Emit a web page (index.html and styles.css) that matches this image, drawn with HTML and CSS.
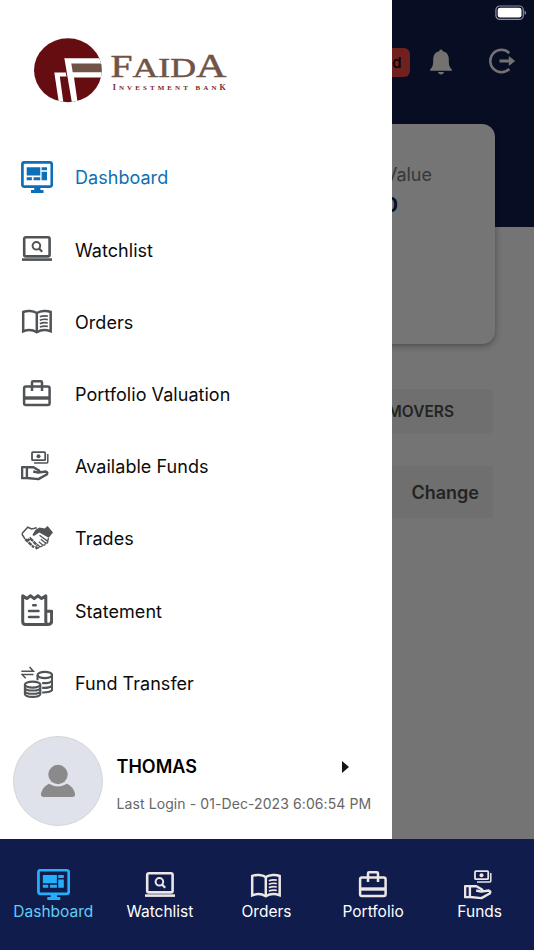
FILE: index.html
```html
<!DOCTYPE html>
<html lang="en">
<head>
<meta charset="utf-8">
<title>Faida Investment Bank</title>
<link rel="stylesheet" href="styles.css">
</head>
<body>
<svg class="sprite" aria-hidden="true">
  <symbol id="i-dash" viewBox="0 0 32 32" preserveAspectRatio="none">
    <rect x="1.4" y="1.3" width="29.4" height="24.4" rx="2.2" fill="none" stroke="currentColor" stroke-width="2.7"/>
    <path fill="currentColor" d="M5.700 6.200h13.600v8.400H5.700zM20.600 6.200H26v3h-5.400zM20.600 10.800H26v8.500h-5.400zM5.700 16.200h5.200v3.100H5.700zM12.600 16.200h6.700v3.100h-6.700zM13.200 26h6.200v3h3.100v3H10v-3h3.200z"/>
  </symbol>
  <symbol id="i-watch" viewBox="0 0 32 32">
    <g fill="none" stroke="currentColor">
      <rect x="3.2" y="4.2" width="25.400" height="19.200" rx="1.600" stroke-width="2.600"/>
      <circle cx="15.400" cy="12.800" r="3.800" stroke-width="2"/>
      <path d="m18 15.500 3.200 3.200" stroke-width="2.300"/>
      <path d="M1 26.600h30" stroke-width="2.600"/>
    </g>
  </symbol>
  <symbol id="i-book" viewBox="0 0 32 32">
    <g fill="none" stroke="currentColor" stroke-width="2.500">
      <path d="M15.800 8C12 5.500 6 5.300 2.200 7v19.300c4-1.600 9.600-1.500 13.600.9 4-2.400 9.600-2.500 13.900-.9V7C26 5.300 19.800 5.500 15.800 8z"/>
      <path d="M15.800 8v19"/>
      <path stroke-width="1.700" d="M18.800 11.800q4-1.500 8-.6M18.800 15.200q4-1.500 8-.6M18.800 18.600q4-1.500 8-.6M18.800 22q4-1.500 8-.6"/>
    </g>
  </symbol>
  <symbol id="i-case" viewBox="0 0 32 32">
    <g fill="none" stroke="currentColor" stroke-width="2.500">
      <rect x="3.100" y="8.500" width="25.500" height="18.500" rx="1.800"/>
      <path d="M11 13V4.400q0-1.200 1.200-1.200h7.600q1.200 0 1.200 1.200V13"/>
      <path d="M3 20h25.800" stroke-width="3.400"/>
    </g>
  </symbol>
  <symbol id="i-funds" viewBox="0 0 32 32">
    <g fill="none" stroke="currentColor" stroke-linejoin="round">
      <rect x="11" y="2.200" width="13.200" height="8" rx=".8" stroke-width="1.800"/>
      <circle cx="17.500" cy="6.200" r="2" fill="currentColor" stroke="none"/>
      <path d="M13 12.900h12.900q.9 0 .9-.9V4" stroke-width="1.500"/>
      <path d="M1.100 17.100h4.800v11H1.100zM6 17.200h6.400l5.600 3.300q1.300 1.700-.8 2.100l-5-1.100M17.200 22.600l7.600-1.100q2.400.9.900 3l-8.300 4.600L6 28" stroke-width="2.400"/>
    </g>
  </symbol>
  <symbol id="i-trade" viewBox="0 0 32 32">
    <path d="m.8 11.800 6-6.600 3.800 1.700 5.200-1.200M.9 12l3 4.800" fill="none" stroke="currentColor" stroke-width="1.500"/>
    <path fill="currentColor" d="m14.500 7.800 4-2.400 5.200 1.100L26.600 4l5.400 6.600-4.300 5.200-9.400-5.300-4.600 3.100q-2.200.7-2.100-1.200z"/>
    <path d="m4.200 17.200 8.800 8.300m1.500 1.100 2.200-1.300M5.600 19.600l3.500-3.200 2.500 2.300 1.700 1.800 1.600 1.700.6 2.200" fill="none" stroke="currentColor" stroke-width="2.400" stroke-dasharray="4 .7"/>
    <path d="m18.500 13.200 8.300 6.200q.3 2.200-2.400 1.500l-4.600-3.700m4.500 3.700q.2 3-2.700 2l-3.800-3.200m3.700 3.200q-.4 2.500-3 1.500l-2.400-2.200m2.300 2.300q-1 2.300-2.800 1.300M27.500 16l-.8 3" fill="none" stroke="currentColor" stroke-width="1.300"/>
  </symbol>
  <symbol id="i-state" viewBox="0 0 32 32">
    <g fill="none" stroke="currentColor" stroke-width="3" stroke-linejoin="round" stroke-linecap="round">
      <path d="M1.700 1.800v25.600q0 3 3 3h22.100q3.800 0 3.800-3.500V17.200h-5.800V1.800l-4.200 2.800-3.700-2.800-3.700 2.800-3.700-2.800-3.700 2.800zM24.800 17v10q0 3.400 2.200 3.400"/>
      <path d="M12.200 11.200h2.500M8 17h9.500M8 23h9.500" stroke-width="2.500"/>
    </g>
  </symbol>
  <symbol id="i-transfer" viewBox="0 0 32 32">
    <g fill="none" stroke="currentColor" stroke-width="2.100">
      <path d="M.3 5.200h12L8.600.9M12.500 8.500H1l3.700 3.800" stroke-width="1.600"/>
      <ellipse cx="23.800" cy="9" rx="7.300" ry="3.100"/>
      <path d="M16.500 9v5.200M31.100 9v14.600c0 1.900-4 3-10 2.900M31.100 14.200c-.3 2.300-5.300 3.400-10 2.800M31.100 18.900c-.3 2.300-5.300 3.400-10 2.800"/>
      <ellipse cx="11.600" cy="18.600" rx="7.700" ry="3"/>
      <path d="M3.900 18.600v9.600c.5 3.600 14.900 3.600 15.400 0v-9.600M3.900 21.800c.5 3.600 14.900 3.600 15.400 0M3.900 25.100c.5 3.600 14.900 3.600 15.400 0"/>
    </g>
  </symbol>
</svg>

<div class="screen">
  <main class="page">
    <header class="top">
      <div class="tools">
        <span class="badge">Closed</span>
        <svg class="bell" viewBox="0 0 22 26"><path fill="currentColor" d="M9.200 2.200Q9.300.6 11 .6t1.800 1.600c4 .8 6 3.900 6 8.200 0 5.600.6 7.600 3 9.800v1.500H.2v-1.500c2.400-2.200 3-4.200 3-9.800 0-4.300 2-7.400 6-8.200zM8 23h6q-.6 2.500-3 2.500T8 23z"/></svg>
        <svg class="exit" viewBox="0 0 28 26"><path fill="none" stroke="currentColor" stroke-width="2.500" d="M21.300 5A11.200 11.200 0 1 0 21.300 21"/><path fill="currentColor" d="M11.500 11.500h9.300V8l6.400 5-6.400 5v-3.500h-9.300z"/></svg>
      </div>
    </header>
    <section class="card">
      <div class="label">Current Value</div>
      <div class="amount">0.00</div>
    </section>
    <div class="tab">TOP MOVERS</div>
    <div class="thead">Change</div>
  </main>
  <div class="backdrop"></div>
  <svg class="battery" viewBox="0 0 32 16"><rect x=".9" y="1" width="27.400" height="13.400" rx="4" fill="none" stroke="#8c90a3" stroke-width="1.200"/><rect x="2.700" y="2.800" width="23.800" height="9.800" rx="2.400" fill="#fff"/><path d="M29.600 5.500q1.600.7 1.600 2.200t-1.600 2.200z" fill="#8c90a3"/></svg>
  <aside class="drawer">
    <svg class="logo" viewBox="0 0 200 72">
      <defs><clipPath id="disc"><ellipse cx="37.900" cy="35.300" rx="33.900" ry="32"/></clipPath></defs>
      <g clip-path="url(#disc)">
        <path fill="#650d11" d="M0 0h75v72H0z"/>
        <path fill="#fff" d="M34 23.300h41v19.300H44L48.300 72h-4.800L41.700 66.500 34.500 24zM24.300 37.500h11.500l.7 4H29.800L34 72h-4.500z"/>
        <path fill="#725347" d="M41.300 28.400H75v8.800H42.700z"/>
      </g>
      <text class="brand" y="42.400" x="80.500" textLength="116" lengthAdjust="spacingAndGlyphs"><tspan font-size="31">F</tspan><tspan font-size="28">AID</tspan><tspan font-size="33">A</tspan></text>
      <text class="sub" y="54.500" x="82.800" textLength="113" lengthAdjust="spacing"><tspan font-size="8">I</tspan>NVESTMENT BAN<tspan font-size="8">K</tspan></text>
    </svg>
    <nav class="menu">
      <a class="row active"><svg><use href="#i-dash"/></svg><span>Dashboard</span></a>
      <a class="row"><svg><use href="#i-watch"/></svg><span>Watchlist</span></a>
      <a class="row"><svg><use href="#i-book"/></svg><span>Orders</span></a>
      <a class="row"><svg><use href="#i-case"/></svg><span>Portfolio Valuation</span></a>
      <a class="row"><svg><use href="#i-funds"/></svg><span>Available Funds</span></a>
      <a class="row"><svg><use href="#i-trade"/></svg><span>Trades</span></a>
      <a class="row"><svg><use href="#i-state"/></svg><span>Statement</span></a>
      <a class="row"><svg><use href="#i-transfer"/></svg><span>Fund Transfer</span></a>
    </nav>
    <div class="user">
      <div class="avatar"><svg viewBox="0 0 36 34"><g fill="#8a8a8a"><circle cx="18" cy="10.500" r="9.700"/><path d="M9 19.800q9 5.400 18 0 6.400 3.200 8 9.700.5 3.500-3 3.500H4q-3.500 0-3-3.500 1.600-6.500 8-9.700z"/></g></svg></div>
      <div class="who">
        <div class="name"><span>THOMAS</span><i class="caret"></i></div>
        <div class="login">Last Login - 01-Dec-2023 6:06:54 PM</div>
      </div>
    </div>
  </aside>
  <nav class="tabs">
    <a class="on"><svg><use href="#i-dash"/></svg>Dashboard</a>
    <a><svg><use href="#i-watch"/></svg>Watchlist</a>
    <a><svg><use href="#i-book"/></svg>Orders</a>
    <a><svg><use href="#i-case"/></svg>Portfolio</a>
    <a><svg><use href="#i-funds"/></svg>Funds</a>
  </nav>
</div>
</body>
</html>
```

FILE: styles.css
```css
* { box-sizing: border-box; }
body { margin: 0; font-family: Inter, "Liberation Sans", sans-serif; }
.sprite { display: none; }
.screen {
  position: relative;
  width: 534px;
  height: 950px;
  overflow: hidden;
  display: flex;
  flex-direction: column;
}
.page {
  flex: 1;
  display: flex;
  flex-direction: column;
  align-items: flex-end;
  background: #f6f6f6;
}
.top {
  align-self: stretch;
  height: 227px;
  flex: none;
  background: #101c4c;
  padding: 47px 18px 0 0;
}
.tools { display: flex; justify-content: flex-end; align-items: center; height: 30px; color: #f7f3f0; }
.badge {
  height: 29px;
  padding: 0 8.500px;
  border-radius: 6px;
  background: #f04545;
  color: #000;
  font: 500 15px/29px Inter, sans-serif;
}
.bell { width: 22px; height: 26px; margin-left: 20px; }
.exit { width: 28px; height: 26px; margin: -3px 0 0 36px; }
.card {
  width: 456px;
  height: 220px;
  flex: none;
  margin: -103px 39px 0 0;
  padding: 39px 63px 0 0;
  border-radius: 13px;
  background: #f9f9f9;
  box-shadow: 0 2px 6px rgba(0, 0, 0, .35);
  text-align: right;
}
.label { font-size: 18px; line-height: 24px; color: #777; }
.amount { margin: 5px 34px 0 0; font-size: 20px; line-height: 26px; font-weight: 700; color: #101c4c; }
.tab {
  width: 220px;
  height: 45px;
  margin: 45px 41px 0 0;
  padding-right: 39px;
  border-radius: 6px;
  background: #ececec;
  color: #4c4c4c;
  text-align: right;
  font-size: 15.500px;
  font-weight: 600;
  line-height: 45px;
}
.thead {
  width: 452px;
  height: 52px;
  margin: 32px 41px 0 0;
  padding-right: 14px;
  background: #ececec;
  color: #4c4c4c;
  text-align: right;
  font-size: 18px;
  font-weight: 600;
  line-height: 53px;
}
.backdrop { position: absolute; inset: 0 0 111px 0; background: rgba(0, 0, 0, .53); }
.battery { position: absolute; top: 5px; right: 7px; width: 32px; height: 16px; }
.drawer {
  position: absolute;
  inset: 0 auto 111px 0;
  width: 392px;
  padding-top: 35px;
  background: #fff;
  display: flex;
  flex-direction: column;
}
.logo { width: 200px; height: 72px; margin-left: 30px; flex: none; }
.brand { font-family: "Liberation Serif", serif; fill: #725347; stroke: #725347; stroke-width: .5; }
.sub { font: 700 7px "Liberation Serif", serif; fill: #7a2528; }
.menu { margin-top: 33.900px; }
.row { display: flex; align-items: center; height: 72.200px; padding-left: 21px; color: #505457; }
.row svg { width: 32px; height: 32px; margin-right: 22px; }
.row span { padding-top: 2px; color: #0b0b0b; font-size: 18px; letter-spacing: .04px; }
.row.active, .row.active span { color: #0d6fb8; }
.user { display: flex; margin: 17.500px 0 0 13px; }
.avatar {
  width: 90px;
  height: 90px;
  border: 1px solid #d5d6d9;
  border-radius: 50%;
  background: #dfe2ea;
  display: grid;
  place-items: center;
}
.avatar svg { width: 36px; height: 34px; }
.who { margin-left: 13.500px; padding-top: 19px; }
.name { display: flex; justify-content: space-between; align-items: center; width: 232px; height: 24px; font-size: 18px; font-weight: 600; color: #000; }
.caret { border: 6px solid transparent; border-left: 7px solid #151515; border-right: 0; }
.login { margin-top: 16px; font-size: 14px; line-height: 18px; letter-spacing: .09px; color: #666; white-space: nowrap; }
.tabs { height: 111px; flex: none; display: grid; grid-template-columns: repeat(5, 106.600px); background: #101c4c; }
.tabs a { display: flex; flex-direction: column; align-items: center; padding-top: 30px; color: #fff; font-size: 15.500px; line-height: 21px; }
.tabs svg { width: 32px; height: 32px; color: #ece6e4; }
.tabs .on { color: #62cdf5; }
.tabs .on svg { width: 33px; height: 31px; margin-bottom: 1px; color: #22b0fb; }
```
